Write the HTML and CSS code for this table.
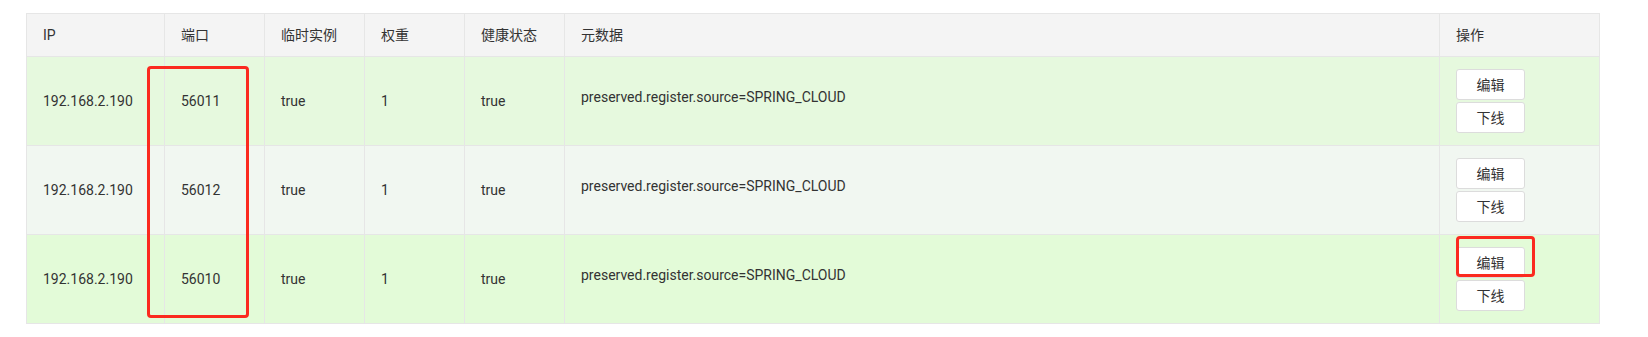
FILE: index.html
```html
<!DOCTYPE html>
<html lang="zh-CN">
<head>
<meta charset="utf-8">
<title>实例列表</title>
<link rel="stylesheet" href="styles.css">
</head>
<body>
<div class="wrap">
  <table class="grid">
    <colgroup>
      <col class="c-ip"><col class="c-port"><col class="c-eph"><col class="c-weight"><col class="c-health"><col class="c-meta"><col class="c-op">
    </colgroup>
    <thead>
      <tr>
        <th>IP</th><th>端口</th><th>临时实例</th><th>权重</th><th>健康状态</th><th>元数据</th><th>操作</th>
      </tr>
    </thead>
    <tbody>
      <tr class="row-a">
        <td>192.168.2.190</td><td>56011</td><td>true</td><td>1</td><td>true</td>
        <td><div class="meta">preserved.register.source=SPRING_CLOUD</div></td>
        <td><div class="ops"><button class="btn">编辑</button><button class="btn">下线</button></div></td>
      </tr>
      <tr class="row-b">
        <td>192.168.2.190</td><td>56012</td><td>true</td><td>1</td><td>true</td>
        <td><div class="meta">preserved.register.source=SPRING_CLOUD</div></td>
        <td><div class="ops"><button class="btn">编辑</button><button class="btn">下线</button></div></td>
      </tr>
      <tr class="row-c">
        <td>192.168.2.190</td><td>56010</td><td>true</td><td>1</td><td>true</td>
        <td><div class="meta">preserved.register.source=SPRING_CLOUD</div></td>
        <td><div class="ops"><button class="btn">编辑</button><button class="btn">下线</button></div></td>
      </tr>
    </tbody>
  </table>
  <div class="mark mark-port"></div>
  <div class="mark mark-edit"></div>
</div>
</body>
</html>
```

FILE: styles.css
```css
html, body {
  margin: 0;
  padding: 0;
  background: #ffffff;
}

body {
  font-family: Roboto, "Noto Sans CJK SC", "Liberation Sans", sans-serif;
  font-size: 14px;
  color: #333333;
}

.wrap {
  position: relative;
  padding: 13px 0 0 26px;
}

.grid {
  table-layout: fixed;
  width: 1574px;
  border-collapse: separate;
  border-spacing: 0;
  border-top: 1px solid #e6e6e6;
  border-left: 1px solid #e6e6e6;
}

.c-ip { width: 138px; }
.c-port, .c-eph, .c-weight, .c-health { width: 100px; }
.c-meta { width: 875px; }
.c-op { width: 160px; }

.grid th,
.grid td {
  box-sizing: border-box;
  border-right: 1px solid #e6e6e6;
  border-bottom: 1px solid #e6e6e6;
  padding: 0 16px;
  text-align: left;
  vertical-align: middle;
  font-weight: normal;
  line-height: 16px;
  white-space: nowrap;
}

.grid th {
  height: 43px;
  background: #f4f4f4;
}

.grid td {
  height: 89px;
  padding-top: 12px;
  padding-bottom: 12px;
}

.row-a td { background: #e6f9de; }
.row-b td { background: #f1f7f1; }
.row-c td { background: #e3fbd8; }

.meta {
  padding-bottom: 8px;
}

.ops {
  display: flex;
  flex-direction: column;
  align-items: flex-start;
  gap: 2px;
}

.btn {
  box-sizing: border-box;
  width: 69px;
  height: 31px;
  padding: 0;
  border: 1px solid #dcdcdc;
  border-radius: 3px;
  background: #ffffff;
  color: #333333;
  font-family: "Noto Sans CJK SC", Roboto, sans-serif;
  font-size: 14px;
  line-height: 29px;
}

.mark {
  position: absolute;
  box-sizing: border-box;
  border: 3px solid #fb2a1f;
  border-radius: 4px;
}

.mark-port {
  left: 147px;
  top: 66px;
  width: 102px;
  height: 252px;
}

.mark-edit {
  left: 1456px;
  top: 236px;
  width: 79px;
  height: 41px;
}
```
